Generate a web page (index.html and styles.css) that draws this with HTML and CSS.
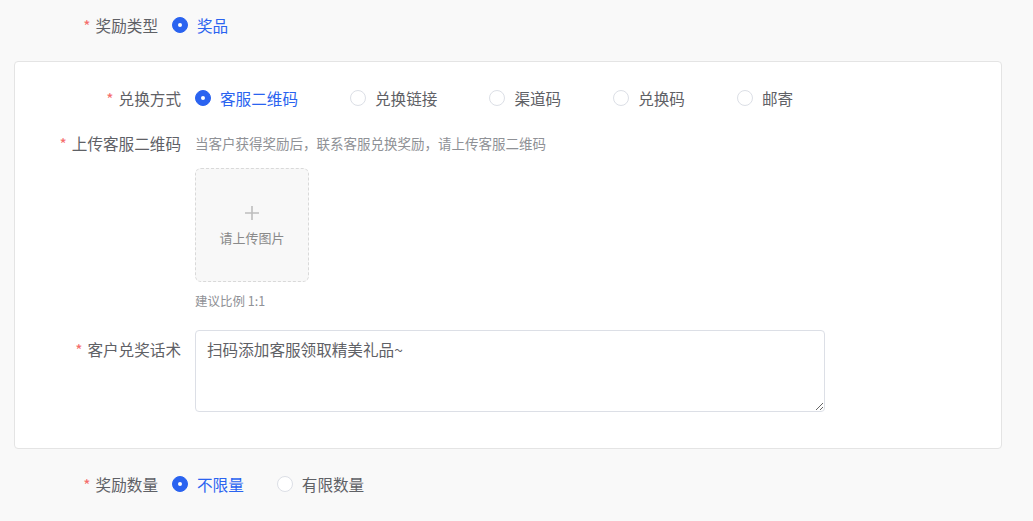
FILE: index.html
```html
<html>

<head>
<meta charset="utf-8">
<link rel="stylesheet" href="styles.css">
</head>

<body>
<div class="form">

    <div class="row">
        <label class="label required">奖励类型</label>
        <div class="field radios">
            <span class="radio checked"><i></i>奖品</span>
        </div>
    </div>

    <div class="panel">
        <div class="row">
            <label class="label required">兑换方式</label>
            <div class="field radios">
                <span class="radio checked"><i></i>客服二维码</span>
                <span class="radio"><i></i>兑换链接</span>
                <span class="radio"><i></i>渠道码</span>
                <span class="radio"><i></i>兑换码</span>
                <span class="radio"><i></i>邮寄</span>
            </div>
        </div>

        <div class="row">
            <label class="label required">上传客服二维码</label>
            <div class="field">
                <div class="hint">当客户获得奖励后，联系客服兑换奖励，请上传客服二维码</div>
                <div class="upload">
                    <svg width="14" height="14" viewBox="0 0 14 14">
                        <path d="M7 0 V14 M0 7 H14" stroke="#bdbdbd" stroke-width="1.6" fill="none"/>
                    </svg>
                    <span>请上传图片</span>
                </div>
                <div class="tip">建议比例 1:1</div>
            </div>
        </div>

        <div class="row row-last">
            <label class="label required">客户兑奖话术</label>
            <div class="field">
                <textarea class="textarea">扫码添加客服领取精美礼品~</textarea>
            </div>
        </div>
    </div>

    <div class="row">
        <label class="label required">奖励数量</label>
        <div class="field radios radios-tight">
            <span class="radio checked"><i></i>不限量</span>
            <span class="radio"><i></i>有限数量</span>
        </div>
    </div>

</div>
</body>

</html>
```

FILE: styles.css
```css
html {
    background: #f9f9f9;
}

body {
    margin: 0;
    font-family: "Noto Sans CJK SC", "Noto Sans", sans-serif;
    font-size: 15.6px;
    color: #5f6166;
}

.form {
    padding: 9px 31px 0 14px;
}

.row {
    display: flex;
    align-items: flex-start;
}

.label {
    width: 144px;
    flex: none;
    text-align: right;
    line-height: 32px;
    padding-right: 14px;
}
.required::before {
    content: "*";
    color: #f56c6c;
    margin-right: 5px;
}

.field {
    flex: 1;
    min-width: 0;
}

.radios {
    display: flex;
    line-height: 32px;
}
.radio {
    display: flex;
    align-items: center;
    margin-right: 52px;
    white-space: nowrap;
}
.radios-tight .radio {
    margin-right: 33px;
}
.radio i {
    width: 14px;
    height: 14px;
    border: 1px solid #dcdfe6;
    border-radius: 50%;
    background: #fff;
    margin-right: 9px;
    box-sizing: content-box;
    position: relative;
}
.radio.checked {
    color: #2a63f0;
}
.radio.checked i {
    background: #2a63f0;
    border-color: #2a63f0;
}
.radio.checked i::after {
    content: "";
    position: absolute;
    left: 5px;
    top: 5px;
    width: 4px;
    height: 4px;
    border-radius: 50%;
    background: #fff;
}

.panel {
    margin: 20px 0 19px 0;
    background: #fff;
    border: 1px solid #e4e4e4;
    border-radius: 4px;
    padding: 20px 0 36px 22px;
}
.panel .row {
    margin-bottom: 13px;
}
.panel .row-last {
    margin-bottom: 0;
}

.hint {
    font-size: 13.5px;
    line-height: 32px;
    color: #8f9196;
}

.upload {
    margin-top: 9px;
    width: 112px;
    height: 112px;
    border: 1px dashed #d9d9d9;
    border-radius: 6px;
    background: #f8f8f8;
    display: flex;
    flex-direction: column;
    align-items: center;
    justify-content: center;
    gap: 10px;
}
.upload span {
    font-size: 13px;
    color: #8a8a8a;
    line-height: 16px;
}
.upload svg {
    margin-top: 2px;
}

.tip {
    margin-top: 9px;
    margin-bottom: 6px;
    font-size: 12.5px;
    color: #8f9196;
    line-height: 20px;
}

.row-last .label {
    padding-top: 3px;
}
.textarea {
    display: block;
    width: 630px;
    height: 82px;
    box-sizing: border-box;
    border: 1px solid #dcdfe6;
    border-radius: 4px;
    padding: 6px 11px;
    font-family: inherit;
    font-size: 15.6px;
    line-height: 24px;
    color: #5f6166;
    background: #fff;
    resize: vertical;
    outline: none;
}
```
